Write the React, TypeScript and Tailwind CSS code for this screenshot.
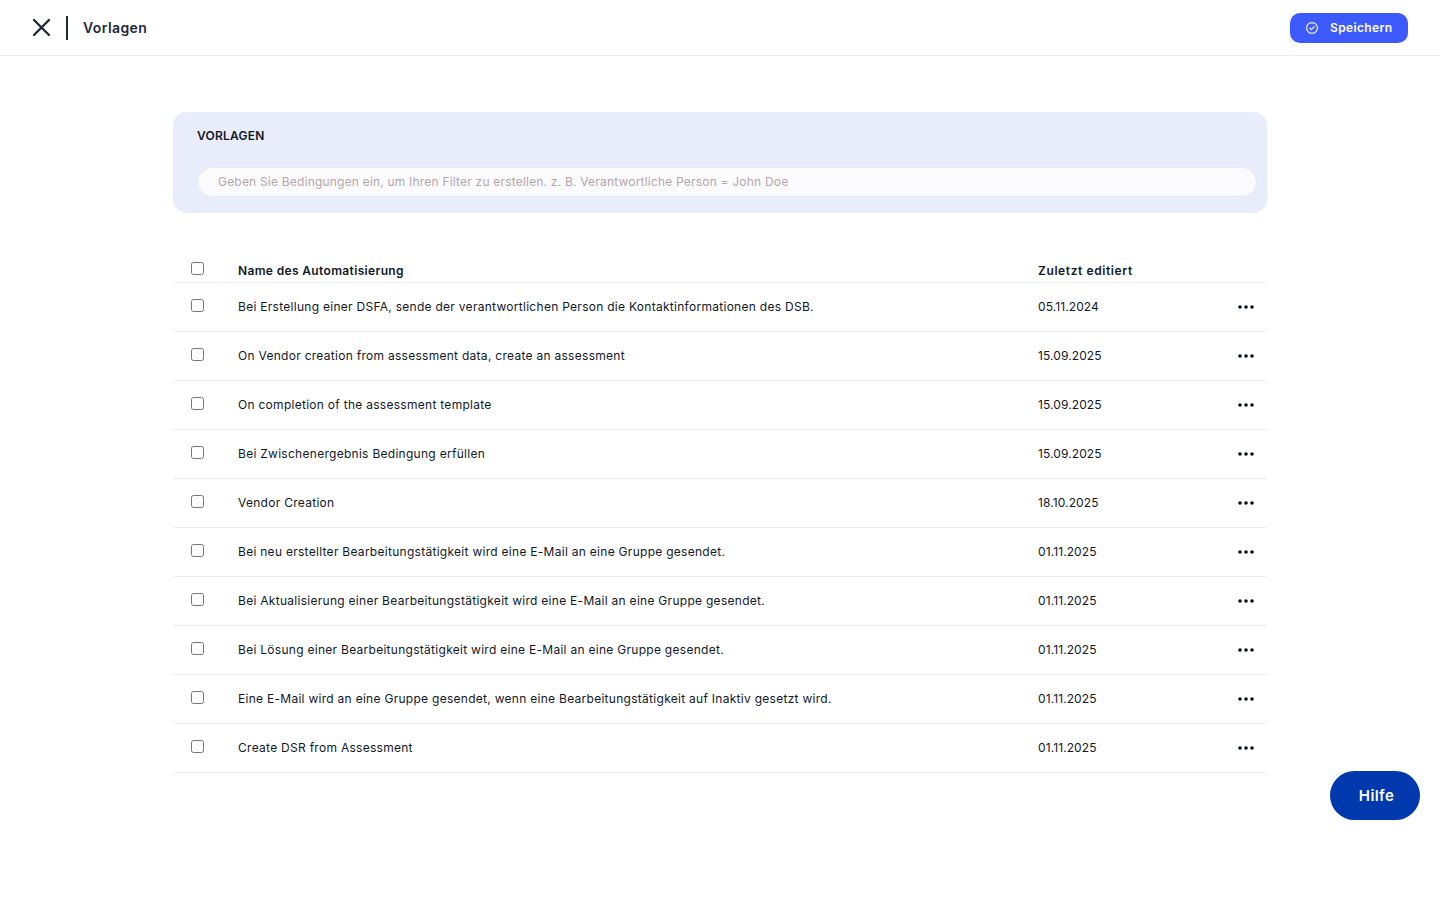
import React from "react";

const rows: [string, string][] = [
  ["Bei Erstellung einer DSFA, sende der verantwortlichen Person die Kontaktinformationen des DSB.", "05.11.2024"],
  ["On Vendor creation from assessment data, create an assessment", "15.09.2025"],
  ["On completion of the assessment template", "15.09.2025"],
  ["Bei Zwischenergebnis Bedingung erfüllen", "15.09.2025"],
  ["Vendor Creation", "18.10.2025"],
  ["Bei neu erstellter Bearbeitungstätigkeit wird eine E-Mail an eine Gruppe gesendet.", "01.11.2025"],
  ["Bei Aktualisierung einer Bearbeitungstätigkeit wird eine E-Mail an eine Gruppe gesendet.", "01.11.2025"],
  ["Bei Lösung einer Bearbeitungstätigkeit wird eine E-Mail an eine Gruppe gesendet.", "01.11.2025"],
  ["Eine E-Mail wird an eine Gruppe gesendet, wenn eine Bearbeitungstätigkeit auf Inaktiv gesetzt wird.", "01.11.2025"],
  ["Create DSR from Assessment", "01.11.2025"],
];

function Dots() {
  return (
    <svg width="16" height="4" viewBox="0 0 16 4" fill="#0b0f19">
      <circle cx="2" cy="2" r="1.8" />
      <circle cx="8" cy="2" r="1.8" />
      <circle cx="14" cy="2" r="1.8" />
    </svg>
  );
}

export default function App() {
  return (
    <div className="relative min-h-[900px] bg-white font-['Inter',sans-serif] text-[#111827]">
      <header className="flex h-14 items-center justify-between border-b border-[#eeeeee] pl-[32px] pr-[32px]">
        <div className="flex items-center">
          <svg width="19" height="19" viewBox="0 0 19 19" fill="none" stroke="#1f2937" strokeWidth="2.4" strokeLinecap="round">
            <path d="M2 2 L17 17 M17 2 L2 17" />
          </svg>
          <div className="ml-[15px] h-6 w-[2px] bg-[#1f2937]" />
          <span className="ml-[15px] text-[14px] font-semibold tracking-[0.4px] text-[#1f2937]">Vorlagen</span>
        </div>
        <button className="flex h-[30px] w-[118px] items-center rounded-[10px] bg-[#3d5afe] pl-[16px] text-white">
          <svg width="12" height="12" viewBox="0 0 12 12" fill="none" stroke="white" strokeWidth="1.1" strokeLinecap="round" strokeLinejoin="round">
            <circle cx="6" cy="6" r="5.4" />
            <path d="M3.8 6.2 L5.3 7.6 L8.2 4.6" />
          </svg>
          <span className="ml-[12px] text-[12px] font-semibold tracking-[0.35px]">Speichern</span>
        </button>
      </header>

      <main className="ml-[173px] w-[1094px] pt-14">
        <section className="h-[101px] rounded-[14px] bg-[#e9ecfb] pl-6 pr-[10px] pt-4">
          <h2 className="text-[12px] font-semibold leading-4 tracking-[0.25px] text-[#111827]">VORLAGEN</h2>
          <div className="mt-[23px] flex h-[30px] items-center rounded-full border border-[#e8e8f0] bg-[#fbfbfe] pl-5 text-[12px] tracking-[0.2px] text-[#b5a5a9]">
            Geben Sie Bedingungen ein, um Ihren Filter zu erstellen. z. B. Verantwortliche Person = John Doe
          </div>
        </section>

        <div className="mt-[45px] flex h-[25px] border-b border-[#eef0f4]">
          <div className="w-[65px] pl-[18px] pt-[4px]">
            <input type="checkbox" className="m-0 block h-[13px] w-[13px]" />
          </div>
          <div className="w-[800px] pt-[5px] text-[12px] font-semibold leading-4 tracking-[0.35px]">Name des Automatisierung</div>
          <div className="pt-[5px] text-[12px] font-semibold leading-4 tracking-[0.6px]">Zuletzt editiert</div>
        </div>

        {rows.map(([name, date], i) => (
          <div key={i} className="flex h-[49px] items-center border-b border-[#eeeeee] text-[12px] tracking-[0.28px]">
            <div className="w-[65px] pb-[3px] pl-[18px]">
              <input type="checkbox" className="m-0 block h-[13px] w-[13px]" />
            </div>
            <div className="w-[800px]">{name}</div>
            <div className="w-[200px] tracking-[0.1px]">{date}</div>
            <Dots />
          </div>
        ))}
      </main>

      <button className="absolute left-[1330px] top-[771px] h-[49px] w-[90px] rounded-full bg-[#0038ad] pl-[3px] pt-[2px] text-[15px] font-semibold tracking-[0.4px] text-white">
        Hilfe
      </button>
    </div>
  );
}
